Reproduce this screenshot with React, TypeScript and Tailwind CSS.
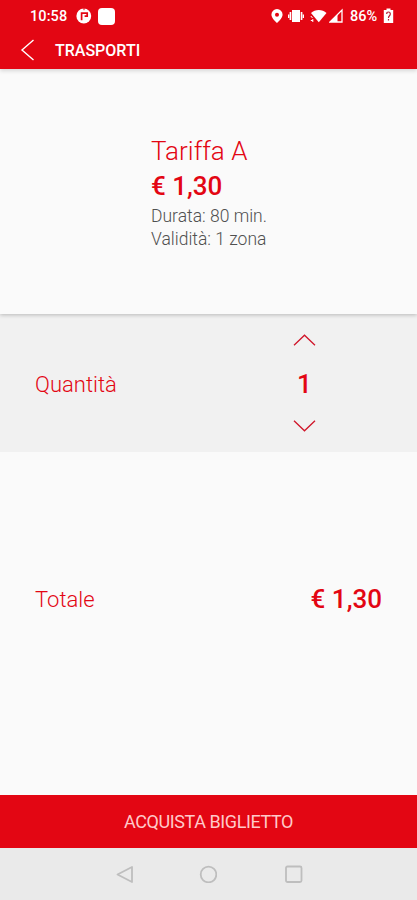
import type { ReactNode } from "react";

function StatusBar() {
  return (
    <div className="flex h-8 items-center text-white">
      <span className="ml-[30px] w-[38px] pt-0.5 text-[14.5px] font-medium leading-none tracking-[0.1px]">10:58</span>
      <svg className="ml-2 h-4 w-4" viewBox="0 0 16 16" fill="none">
        <circle cx="7.8" cy="8" r="7.4" fill="#fff" />
        <path d="M5.6 12.2V5.2h5.6v3H8.6" stroke="#e30613" strokeWidth="1.7" />
        <path d="M8 0v2.2" stroke="#e30613" strokeWidth="1" />
      </svg>
      <span className="ml-1.5 h-[17px] w-[17px] rounded-[4px] bg-white" />
      <svg className="ml-auto h-4 w-3" viewBox="0 0 12 16" fill="#fff">
        <path fillRule="evenodd" d="M6 1.1A5.6 5.6 0 0 0 .4 6.7C.4 10.2 6 15 6 15s5.6-4.8 5.6-8.3A5.6 5.6 0 0 0 6 1.1zm0 3.6a2 2 0 1 1 0 4 2 2 0 0 1 0-4z" />
      </svg>
      <svg className="ml-[5px] h-4 w-4" viewBox="0 0 16 16" fill="#fff">
        <path d="M4 2h8v12H4zM1.600 4h1.700v8H1.600zM12.700 4h1.700v8h-1.700zM0 6.500h1.200v3.500H0zM14.800 6.500H16v3.500h-1.200z" />
      </svg>
      <svg className="ml-1.5 h-4 w-[17px]" viewBox="0 0 17 16" fill="#fff">
        <path d="M1 5C5 1 12.500 1 16.500 5L8.800 14.300z" />
        <path d="M.8 8l1.700 2M2.800 11v3M.8 12.500h2" stroke="#fff" strokeWidth="1" />
      </svg>
      <svg className="ml-[2px] h-4 w-[14px]" viewBox="0 0 14 16">
        <path d="M1 14L13 2v12z" fill="#e30613" stroke="#fff" strokeWidth="1.3" />
        <path d="M1 14L8.500 6.500V14z" fill="#fff" />
      </svg>
      <span className="ml-[7px] w-[28px] pt-0.5 text-[14.5px] font-medium leading-none">86%</span>
      <svg className="ml-[5px] mr-[23px] h-4 w-[11px]" viewBox="0 0 11 16">
        <path d="M3.5 .5h4V2h2.700v13H.8V2h2.700z" fill="#fff" />
        <path d="M3.700 6q0-2 1.800-2t1.800 2q0 1-1 2t-.8 2M5.500 11v1.500" stroke="#b51e35" strokeWidth="1.2" fill="none" />
      </svg>
    </div>
  );
}

function Header() {
  return (
    <header className="relative z-10 h-[69px] shrink-0 bg-[#e30613] text-white shadow-[0_2px_4px_rgba(0,0,0,0.14)]">
      <StatusBar />
      <div className="flex h-9 items-center">
        <button className="ml-5">
          <svg className="h-6 w-[15px]" viewBox="0 0 15 24" fill="none" stroke="#fff" strokeWidth="1.4">
            <path d="M13.500 2L2 12l11.500 10" />
          </svg>
        </button>
        <h1 className="ml-5 pt-px text-[16px] font-medium leading-none">TRASPORTI</h1>
      </div>
    </header>
  );
}

function Price({ children }: { children: ReactNode }) {
  return <p className="text-[26px] font-medium leading-[35px]">{children}</p>;
}

function Chevron({ down = false }: { down?: boolean }) {
  return (
    <svg className="h-3 w-[23px]" viewBox="0 0 23 12" fill="none" stroke="#d0162a" strokeWidth="1.3">
      <path d={down ? "M1 .8l10.500 10L22 .8" : "M1 11.200L11.500 1.200 22 11.200"} />
    </svg>
  );
}

function Ticket() {
  return (
    <section className="relative z-[5] h-[245px] shrink-0 bg-[#fafafa] pl-[151px] pt-16 shadow-[0_1px_4px_rgba(0,0,0,0.24)]">
      <h2 className="text-[26px] font-light leading-9">Tariffa A</h2>
      <Price>€ 1,30</Price>
      <div className="pt-px text-[17.5px] font-light leading-[23px] text-[#505050]">
        <p>Durata: 80 min.</p>
        <p>Validità: 1 zona</p>
      </div>
    </section>
  );
}

function Quantity() {
  return (
    <section className="flex h-[138px] shrink-0 items-center bg-[#f1f1f1] pl-[35px]">
      <span className="w-[258px] pt-0.5 text-[22px] font-light">Quantità</span>
      <div className="flex w-[23px] flex-col items-center">
        <button><Chevron /></button>
        <span className="mb-[18px] mt-5 text-[26px] font-medium leading-9">1</span>
        <button><Chevron down /></button>
      </div>
    </section>
  );
}

function NavigationBar() {
  return (
    <nav className="flex h-[52px] shrink-0 items-center bg-[#eaeaea] pl-[116px]">
      <svg className="h-[18px] w-[18px]" viewBox="0 0 18 18" fill="none" stroke="#bebebe" strokeWidth="1.8" strokeLinejoin="round">
        <path d="M16 2v15L1.500 9.500z" />
      </svg>
      <svg className="ml-[65px] h-[18px] w-[18px]" viewBox="0 0 18 18" fill="none" stroke="#bebebe" strokeWidth="1.8">
        <circle cx="9.500" cy="9.500" r="7.800" />
      </svg>
      <svg className="ml-[68px] h-[18px] w-[18px]" viewBox="0 0 18 18" fill="none" stroke="#bebebe" strokeWidth="1.8">
        <rect x="1" y="1.500" width="15.500" height="15.500" rx="1.500" />
      </svg>
    </nav>
  );
}

export default function App() {
  return (
    <div className="flex h-[900px] w-[417px] flex-col overflow-hidden bg-[#fafafa] font-[Roboto,sans-serif] text-[#e30613]">
      <Header />
      <Ticket />
      <Quantity />
      <section className="flex flex-1 items-start justify-between px-[35px] pt-[130px]">
        <span className="text-[22px] font-light leading-9">Totale</span>
        <Price>€ 1,30</Price>
      </section>
      <button className="h-[53px] shrink-0 bg-[#e30613] text-[18px] font-normal leading-none tracking-[-0.4px] text-[#ffc9c9]">
        ACQUISTA BIGLIETTO
      </button>
      <NavigationBar />
    </div>
  );
}
